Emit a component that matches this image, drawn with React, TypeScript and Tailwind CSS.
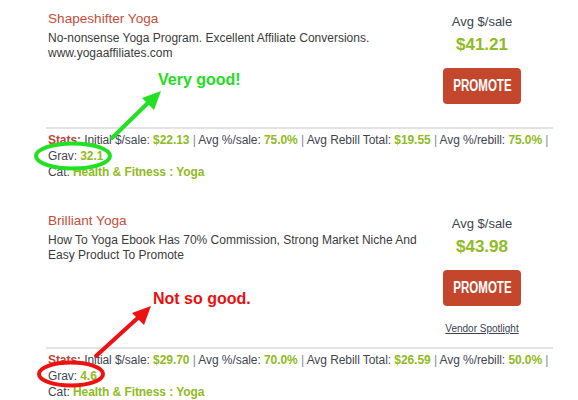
const green = "text-[#8fbb24]";

function Stat({ label, value }: { label: string; value: string }) {
  return (
    <>
      {label} <span className={`font-bold ${green}`}>{value}</span>{" "}
      <span className="text-[#7a8aa0]">|</span>{" "}
    </>
  );
}

function Product({
  title,
  lines,
  price,
  initial,
  pctSale,
  rebill,
  pctRebill,
  grav,
  spotlight,
  rowHeight,
}: {
  title: string;
  lines: string[];
  price: string;
  initial: string;
  pctSale: string;
  rebill: string;
  pctRebill: string;
  grav: string;
  spotlight?: boolean;
  rowHeight: string;
}) {
  return (
    <div className="ml-[46px] w-[507px]">
      <div className={`flex ${rowHeight}`}>
        <div className="flex-1 pl-[2px]">
          <h3 className="text-[13.6px] leading-[18px] text-[#c24f3b]">{title}</h3>
          <p className="mt-[3px] text-[12px] leading-[15px] text-[#3b3b3b] whitespace-nowrap">
            {lines.map((l, i) => (
              <span key={i}>
                {l}
                {i < lines.length - 1 && <br />}
              </span>
            ))}
          </p>
        </div>
        <div className="mr-[11px] flex w-[120px] flex-col items-center pt-[4px]">
          <div className="text-[13px] leading-[16px] text-[#3d4450]">Avg $/sale</div>
          <div className={`mt-[4px] text-[17px] font-bold leading-[22px] ${green}`}>{price}</div>
          <button className="mt-[12px] flex h-[36px] w-[78px] items-center justify-center rounded-[4px] bg-[#c4472d] text-white">
            <span className="inline-block scale-x-[0.72] text-[16px] font-bold leading-[16px]">PROMOTE</span>
          </button>
          {spotlight && (
            <div className="mt-[16px] text-[10px] leading-[14px] text-[#3a4250] underline">
              Vendor Spotlight
            </div>
          )}
        </div>
      </div>
      <div className="border-t-2 border-[#e3e3e3] pl-[2px] pt-[3px] text-[12px] leading-[16px] tracking-[-0.07px] text-[#3f4650] whitespace-nowrap">
        <div>
          <span className="font-bold text-[#c0453a]">Stats:</span> <Stat label="Initial $/sale:" value={initial} />
          <Stat label="Avg %/sale:" value={pctSale} />
          <Stat label="Avg Rebill Total:" value={rebill} />
          <Stat label="Avg %/rebill:" value={pctRebill} />
        </div>
        <div>
          Grav: <span className={`font-bold ${green}`}>{grav}</span>
        </div>
        <div>
          Cat: <span className={`font-bold ${green}`}>Health &amp; Fitness : Yoga</span>
        </div>
      </div>
    </div>
  );
}

export default function App() {
  return (
    <div
      className="relative h-[400px] w-[578px] overflow-hidden bg-white pt-[10px]"
      style={{ fontFamily: '"Liberation Sans", Arial, sans-serif' }}
    >
      <Product
        title="Shapeshifter Yoga"
        lines={["No-nonsense Yoga Program. Excellent Affiliate Conversions.", "www.yogaaffiliates.com"]}
        price="$41.21"
        initial="$22.13"
        pctSale="75.0%"
        rebill="$19.55"
        pctRebill="75.0%"
        grav="32.1"
        rowHeight="h-[117px]"
      />
      <div className="h-[32px]" />
      <Product
        title="Brilliant Yoga"
        lines={["How To Yoga Ebook Has 70% Commission, Strong Market Niche And", "Easy Product To Promote"]}
        price="$43.98"
        initial="$29.70"
        pctSale="70.0%"
        rebill="$26.59"
        pctRebill="50.0%"
        grav="4.6"
        spotlight
        rowHeight="h-[135px]"
      />

      {/* annotations */}
      <div className="absolute left-[158px] top-[70px] text-[16px] font-bold leading-[20px] text-[#22dd22]">
        Very good!
      </div>
      <div className="absolute left-[153px] top-[289px] text-[16px] font-bold leading-[20px] text-[#e81010]">
        Not so good.
      </div>
      <svg className="pointer-events-none absolute left-0 top-0" width="578" height="400">
        <line x1="112" y1="138" x2="151" y2="100" stroke="#22e022" strokeWidth="4" strokeLinecap="round" />
        <polygon points="161,91 142,98 154,110" fill="#22e022" />
        <ellipse cx="73" cy="156" rx="37" ry="12.5" fill="none" stroke="#22e022" strokeWidth="4" />
        <line x1="96" y1="356" x2="141" y2="315" stroke="#ee1111" strokeWidth="4" strokeLinecap="round" />
        <polygon points="151,306 132,313 144,325" fill="#ee1111" />
        <ellipse cx="71" cy="374" rx="32" ry="11.5" fill="none" stroke="#ee1111" strokeWidth="4" />
      </svg>
    </div>
  );
}
